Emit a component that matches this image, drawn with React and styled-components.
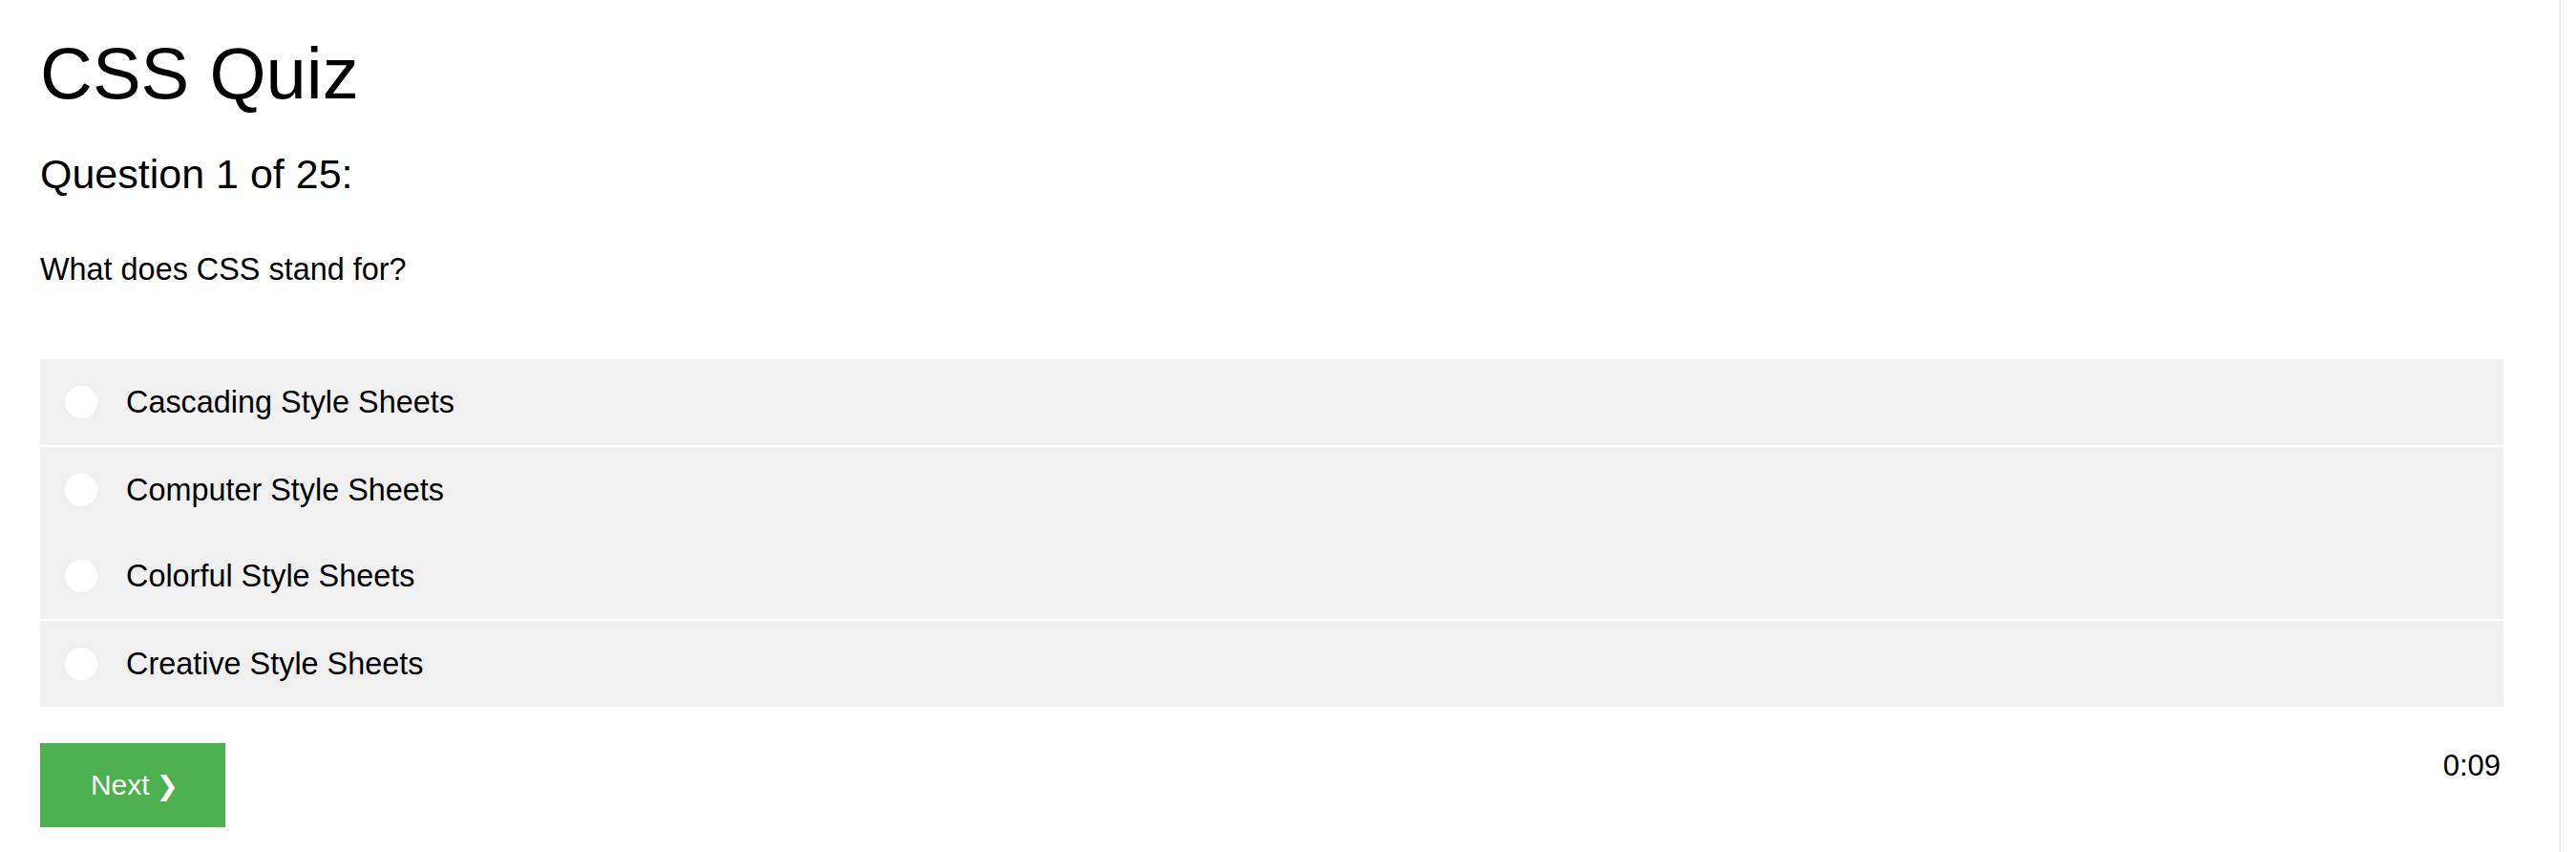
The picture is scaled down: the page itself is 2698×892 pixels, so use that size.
import React from 'react';
import styled, { createGlobalStyle } from 'styled-components';

const GlobalStyle = createGlobalStyle`
	html, body {
		margin: 0;
		padding: 0;
		background: #fff;
		color: #000;
		font-family: 'Liberation Sans', Arial, Helvetica, sans-serif;
	}
`;

const Page = styled.div`
	box-sizing: border-box;
	width: 2682px;
	min-height: 100vh;
	padding: 38px 58px 0 42px;
	border-right: 2px solid #efefef;
	display: flex;
	flex-direction: column;
`;

const Title = styled.h1`
	margin: 0;
	font-size: 76px;
	font-weight: 400;
	line-height: 78px;
`;

const QuestionNumber = styled.h3`
	margin: 45px 0 0;
	font-size: 43px;
	font-weight: 400;
	line-height: 43px;
`;

const QuestionText = styled.p`
	margin: 62px 0 0;
	font-size: 32.4px;
	line-height: 32px;
`;

const Options = styled.div`
	margin-top: 78px;
	display: flex;
	flex-direction: column;
`;

const Option = styled.label`
	height: 90px;
	margin-bottom: ${(p) => (p.divider ? '2px' : '0')};
	background: #f0f0f0;
	display: flex;
	align-items: center;
	gap: 30px;
	padding: 0 0 0 26px;
	font-size: 32.4px;
	cursor: pointer;
`;

const Radio = styled.span`
	width: 34px;
	height: 34px;
	border-radius: 50%;
	background: #fff;
	flex-shrink: 0;
`;

const Footer = styled.div`
	margin-top: 38px;
	display: flex;
	justify-content: space-between;
	align-items: flex-start;
`;

const NextButton = styled.button`
	width: 194px;
	height: 88px;
	border: none;
	background: #4caf50;
	color: #fff;
	font-family: 'Liberation Sans', Arial, sans-serif;
	font-size: 30px;
	cursor: pointer;
	display: flex;
	align-items: center;
	justify-content: center;
	gap: 7px;
	padding: 0 0 0 4px;
`;

const Chevron = styled.span`
	font-family: 'DejaVu Sans', sans-serif;
	font-size: 28px;
	font-weight: 700;
`;

const Timer = styled.div`
	margin-top: 6px;
	padding-right: 3px;
	font-size: 31px;
	line-height: 36px;
`;

const answers = [
	{ text: 'Cascading Style Sheets', divider: true },
	{ text: 'Computer Style Sheets', divider: false },
	{ text: 'Colorful Style Sheets', divider: true },
	{ text: 'Creative Style Sheets', divider: false },
];

const App = () => {
	return (
		<>
			<GlobalStyle />
			<Page>
				<Title>CSS Quiz</Title>
				<QuestionNumber>Question 1 of 25:</QuestionNumber>
				<QuestionText>What does CSS stand for?</QuestionText>
				<Options>
					{answers.map((a) => (
						<Option key={a.text} divider={a.divider}>
							<Radio />
							{a.text}
						</Option>
					))}
				</Options>
				<Footer>
					<NextButton>
						Next <Chevron>❯</Chevron>
					</NextButton>
					<Timer>0:09</Timer>
				</Footer>
			</Page>
		</>
	);
};

export default App;
